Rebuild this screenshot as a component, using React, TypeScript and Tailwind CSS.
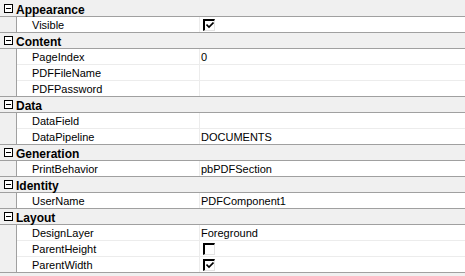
import React from 'react'

type Prop = { name: string; value?: string; check?: boolean }
type Group = { title: string; props: Prop[] }

const groups: Group[] = [
  { title: 'Appearance', props: [{ name: 'Visible', check: true }] },
  {
    title: 'Content',
    props: [{ name: 'PageIndex', value: '0' }, { name: 'PDFFileName' }, { name: 'PDFPassword' }],
  },
  { title: 'Data', props: [{ name: 'DataField' }, { name: 'DataPipeline', value: 'DOCUMENTS' }] },
  { title: 'Generation', props: [{ name: 'PrintBehavior', value: 'pbPDFSection' }] },
  { title: 'Identity', props: [{ name: 'UserName', value: 'PDFComponent1' }] },
  {
    title: 'Layout',
    props: [
      { name: 'DesignLayer', value: 'Foreground' },
      { name: 'ParentHeight', check: false },
      { name: 'ParentWidth', check: true },
    ],
  },
]

function CheckBox({ checked }: { checked: boolean }) {
  return (
    <div className="w-[12px] h-[12px] border-t-2 border-l-2 border-black border-r border-b border-r-[#e3e3e3] border-b-[#e3e3e3] bg-white flex items-center justify-center">
      {checked && (
        <svg width="8" height="7" viewBox="0 0 8 7">
          <path d="M0.5 2.5 L3 5 L7.5 0.5" stroke="#000" strokeWidth="1.6" fill="none" />
        </svg>
      )}
    </div>
  )
}

function MinusBox() {
  return (
    <div className="w-[9px] h-[9px] border border-black bg-white flex items-center justify-center">
      <div className="w-[5px] h-px bg-black" />
    </div>
  )
}

export default function App() {
  return (
    <div
      className="w-[465px] h-[276px] pt-[1px] bg-[#f0f0f0] text-[11px] text-black overflow-hidden"
      style={{ fontFamily: 'Tahoma, "Liberation Sans", Arial, sans-serif' }}
    >
      {groups.map(g => (
        <div key={g.title} className="border-b border-[#a0a0a0]">
          <div className="h-[16px] flex items-center border-b border-[#a0a0a0] bg-[#f0f0f0]">
            <div className="w-[16px] flex justify-center pl-[1px]">
              <MinusBox />
            </div>
            <span className="font-bold text-[12px] leading-none pt-[2px]">{g.title}</span>
          </div>
          <div className="ml-[16px] border-l border-[#a0a0a0] bg-white">
            {g.props.map((p, i) => (
              <div
                key={p.name}
                className={i < g.props.length - 1 ? 'h-[16px] flex border-b border-[#ececec]' : 'h-[15px] flex'}
              >
                <div className="w-[183px] pl-[15px] pt-[2px] flex items-center border-r border-[#ececec] leading-none">
                  {p.name}
                </div>
                <div className="flex-1 pl-[1px] flex items-center leading-none">
                  {p.check !== undefined ? (
                    <div className="pl-[2px]">
                      <CheckBox checked={p.check} />
                    </div>
                  ) : (
                    <span className="pt-[2px]">{p.value}</span>
                  )}
                </div>
              </div>
            ))}
          </div>
        </div>
      ))}
    </div>
  )
}
